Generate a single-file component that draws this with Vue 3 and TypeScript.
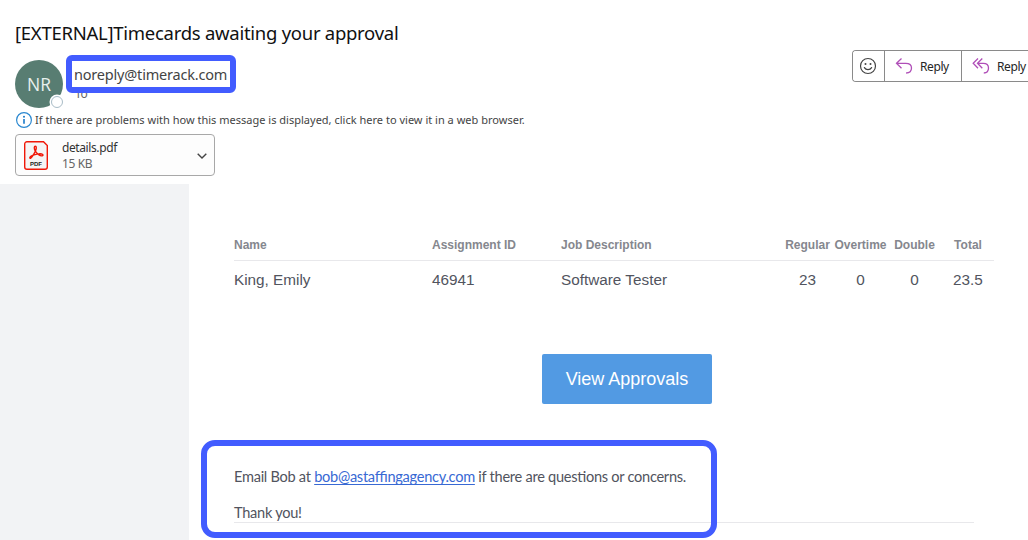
<script setup lang="ts">
interface Timecard {
  name: string;
  assignmentId: string;
  job: string;
  regular: string;
  overtime: string;
  double: string;
  total: string;
}

const sender = 'noreply@timerack.com';
const contact = 'bob@astaffingagency.com';

const columns: { key: keyof Timecard; label: string; numeric?: boolean }[] = [
  { key: 'name', label: 'Name' },
  { key: 'assignmentId', label: 'Assignment ID' },
  { key: 'job', label: 'Job Description' },
  { key: 'regular', label: 'Regular', numeric: true },
  { key: 'overtime', label: 'Overtime', numeric: true },
  { key: 'double', label: 'Double', numeric: true },
  { key: 'total', label: 'Total', numeric: true }
];

const timecards: Timecard[] = [
  {
    name: 'King, Emily',
    assignmentId: '46941',
    job: 'Software Tester',
    regular: '23',
    overtime: '0',
    double: '0',
    total: '23.5'
  }
];
</script>

<template>
  <div class="mail">
    <header class="mail-header">
      <h1 class="subject">[EXTERNAL]Timecards awaiting your approval</h1>

      <div class="sender-row">
        <div class="avatar">
          NR
          <span class="presence"></span>
        </div>
        <div class="addresses">
          <span class="to">To</span>
          <span class="callout sender">{{ sender }}</span>
        </div>
        <div class="actions">
          <button class="action react" aria-label="React">
            <svg width="18" height="18" viewBox="0 0 18 18" fill="none" stroke="#444" stroke-width="1.2">
              <circle cx="9" cy="9" r="7.5" />
              <path d="M5.4 10.6c.8 1.4 2 2.1 3.6 2.1s2.8-.7 3.6-2.1" stroke-linecap="round" />
              <circle cx="6.5" cy="7" r="1" fill="#444" stroke="none" />
              <circle cx="11.5" cy="7" r="1" fill="#444" stroke="none" />
            </svg>
          </button>
          <button class="action reply">
            <svg width="18" height="18" viewBox="0 0 18 18" fill="none" stroke="#b04fb8" stroke-width="1.3">
              <path d="M6.5 1.5 1.5 6.3l5 4.9M1.5 6.3h9.3c3.5 0 5.7 2 5.7 4.8 0 3-2.2 4.9-5.4 4.9" />
            </svg>
            <span>Reply</span>
          </button>
          <button class="action reply-all" aria-label="Reply all">
            <svg width="18" height="18" viewBox="0 0 18 18" fill="none" stroke="#b04fb8" stroke-width="1.3">
              <path d="M6 1.5 1.2 6.3 6 11.2M10.3 1.5 5.5 6.3l4.8 4.9M5.5 6.3h5.8c3.2 0 5.2 2 5.2 4.8 0 3-2 4.9-4.7 4.9" />
            </svg>
            <span>Reply</span>
          </button>
        </div>
      </div>

      <div class="info-bar">
        <svg width="16" height="16" viewBox="0 0 16 16" fill="none">
          <circle cx="8" cy="8" r="7.4" stroke="#2b88d0" stroke-width="1.2" />
          <path d="M8 7v4.8" stroke="#1878c8" stroke-width="1.6" />
          <circle cx="8" cy="4.7" r="1" fill="#1878c8" />
        </svg>
        <span class="info-text">If there are problems with how this message is displayed, click here to view it in a web browser.</span>
      </div>

      <div class="attachment">
        <svg width="24" height="29" viewBox="0 0 24 29" fill="none">
          <path
            d="M3 .7h16.5l3.8 3.8V26a2.3 2.3 0 0 1-2.3 2.3H3A2.3 2.3 0 0 1 .7 26V3A2.3 2.3 0 0 1 3 .7z"
            fill="#f5f5f5"
            stroke="#f01808"
            stroke-width="1.4"
          />
          <path
            d="M6 17.2c-.8-1 1.2-2.3 3.2-3.1 1.7-2.7 3.1-5.7 3.1-7.4 0-2-2-2-2 0 0 2.4 2.5 5.5 4.7 7.2 1.6 1.2 4 1.3 4 .2s-2.200-1.500-4.300-1.200c-2 .2-3.700.6-5.500 1.200-1.200 1.900-2.600 3.800-3.200 3.100z"
            stroke="#f01808"
            stroke-width="1.4"
          />
          <text x="12" y="24.8" class="pdf-label">PDF</text>
        </svg>
        <div class="file">
          <span class="file-name">details.pdf</span>
          <span class="file-size">15 KB</span>
        </div>
        <svg class="chevron" width="10" height="6" viewBox="0 0 10 6" fill="none">
          <path d="M.7.7 5 5 9.3.7" stroke="#444" stroke-width="1.4" />
        </svg>
      </div>
    </header>

    <div class="mail-body">
      <aside class="gutter"></aside>
      <main class="content">
        <div class="grid head">
          <span v-for="col in columns" :key="col.key" :class="{ numeric: col.numeric }">{{ col.label }}</span>
        </div>
        <div v-for="card in timecards" :key="card.assignmentId" class="grid row">
          <span v-for="col in columns" :key="col.key" :class="{ numeric: col.numeric }">{{ card[col.key] }}</span>
        </div>

        <a class="approve">View Approvals</a>

        <section class="contact">
          <p class="line">Email Bob at <a class="link">{{ contact }}</a> if there are questions or concerns.</p>
          <p class="line thanks">Thank you!</p>
          <div class="callout contact-outline"></div>
        </section>
      </main>
    </div>
  </div>
</template>

<style>
body {
  margin: 0;
  background: #fff;
  overflow: hidden;
}
</style>

<style scoped>
.mail {
  width: 1028px;
  height: 540px;
  display: flex;
  flex-direction: column;
  overflow: hidden;
  background: #fff;
  font-family: 'Noto Sans', 'Open Sans', sans-serif;
}

.mail-header {
  height: 184px;
  padding: 20px 0 0 15px;
  box-sizing: border-box;
  flex: none;
}

.subject {
  margin: 0;
  height: 30px;
  line-height: 26px;
  font-size: 18.5px;
  font-weight: 400;
  letter-spacing: -0.27px;
  color: #111;
  white-space: nowrap;
}

.sender-row {
  display: flex;
  height: 62px;
}

.avatar {
  position: relative;
  width: 48px;
  height: 48px;
  margin-top: 10px;
  border-radius: 50%;
  background: #587d72;
  color: #e8f0ed;
  font-family: 'Open Sans', 'Noto Sans', sans-serif;
  font-size: 17.5px;
  line-height: 49px;
  text-align: center;
}

.presence {
  position: absolute;
  right: 0;
  bottom: 0;
  width: 10px;
  height: 10px;
  border: 1.5px solid #a9bcc7;
  border-radius: 50%;
  background: #fff;
  box-shadow: 0 0 0 1.5px #fff;
}

.addresses {
  position: relative;
  margin-left: 3px;
  flex: 1;
}

.to {
  display: block;
  margin: 35px 0 0 9px;
  font-size: 12px;
  letter-spacing: -0.4px;
  line-height: 18px;
  color: #666;
}

.callout {
  position: absolute;
  box-sizing: border-box;
  border: 6px solid #425cff;
}

.sender {
  top: 5px;
  left: 0;
  width: 170px;
  height: 38px;
  padding-left: 2px;
  border-radius: 6px;
  background: #fff;
  color: #444;
  font-size: 14.5px;
  letter-spacing: -0.2px;
  line-height: 27px;
  white-space: nowrap;
}

.actions {
  display: flex;
  flex: none;
  width: 176px;
  height: 32px;
  overflow: hidden;
  box-sizing: border-box;
  border: 1px solid #8a8a8a;
  border-right: 0;
  border-radius: 4px 0 0 4px;
}

.action {
  display: flex;
  align-items: center;
  flex: none;
  margin: 0;
  padding: 0;
  border: 0;
  background: #fff;
  color: #262626;
  font-family: inherit;
  font-size: 12px;
  letter-spacing: -0.4px;
  white-space: nowrap;
}

.action svg {
  flex: none;
}

.react {
  width: 31px;
  padding-left: 6px;
}

.reply,
.reply-all {
  width: 77px;
  box-sizing: border-box;
  gap: 7px;
  padding-left: 10px;
  border-left: 1px solid #8a8a8a;
}

.info-bar {
  display: flex;
  align-items: center;
  gap: 3px;
  height: 16px;
  padding-left: 1px;
  color: #444;
  font-size: 11px;
  white-space: nowrap;
}

.info-text {
  padding-bottom: 2px;
  letter-spacing: 0.01px;
}

.attachment {
  display: flex;
  align-items: center;
  width: 200px;
  height: 42px;
  margin-top: 6px;
  padding: 0 7px 0 8px;
  box-sizing: border-box;
  border: 1px solid #a8a8a8;
  border-radius: 4px;
  background: #fdfdfd;
}

.pdf-label {
  fill: #222;
  font-family: 'Liberation Sans', sans-serif;
  font-size: 6px;
  font-weight: 700;
  text-anchor: middle;
}

.file {
  display: flex;
  flex-direction: column;
  flex: 1;
  margin-left: 14px;
  padding-top: 2px;
  font-size: 12px;
  letter-spacing: -0.4px;
  line-height: 16px;
}

.file-name {
  color: #333;
}

.file-size {
  color: #666;
}

.chevron {
  margin-top: 2px;
}

.mail-body {
  display: flex;
  flex: 1;
}

.gutter {
  width: 189px;
  background: #f2f3f5;
}

.content {
  display: flex;
  flex-direction: column;
  width: 760px;
  padding: 50px 0 0 45px;
  font-family: 'Liberation Sans', Arial, sans-serif;
}

.grid {
  display: grid;
  grid-template-columns: 198px 129px 220px 53px 53px 55px 52px;
  white-space: nowrap;
}

.numeric {
  justify-self: center;
}

.head {
  height: 26px;
  border-bottom: 1px solid #e8e8eb;
  color: #85878e;
  font-size: 12px;
  font-weight: 700;
  line-height: 22px;
}

.row {
  height: 38px;
  color: #51545e;
  font-size: 15.3px;
  line-height: 38px;
}

.approve {
  width: 170px;
  height: 50px;
  margin: 55px 0 0 308px;
  border-radius: 2px;
  background: #529ae3;
  color: #fff;
  font-size: 18px;
  line-height: 50px;
  text-align: center;
}

.contact {
  position: relative;
  width: 740px;
  height: 82px;
  margin-top: 36px;
  border-bottom: 1px solid #e8e8eb;
  color: #51545e;
  font-family: Lato, sans-serif;
  font-size: 14.6px;
  font-feature-settings: 'liga' 1;
  letter-spacing: -0.28px;
}

.line {
  margin: 0;
  padding-top: 24px;
  line-height: 26px;
  white-space: nowrap;
}

.thanks {
  padding-top: 10px;
}

.link {
  color: #3869d4;
  text-decoration: underline;
  text-decoration-skip-ink: none;
  text-underline-offset: 2px;
}

.contact-outline {
  top: 0;
  left: -33px;
  width: 516px;
  height: 98px;
  border-radius: 14px;
}
</style>
